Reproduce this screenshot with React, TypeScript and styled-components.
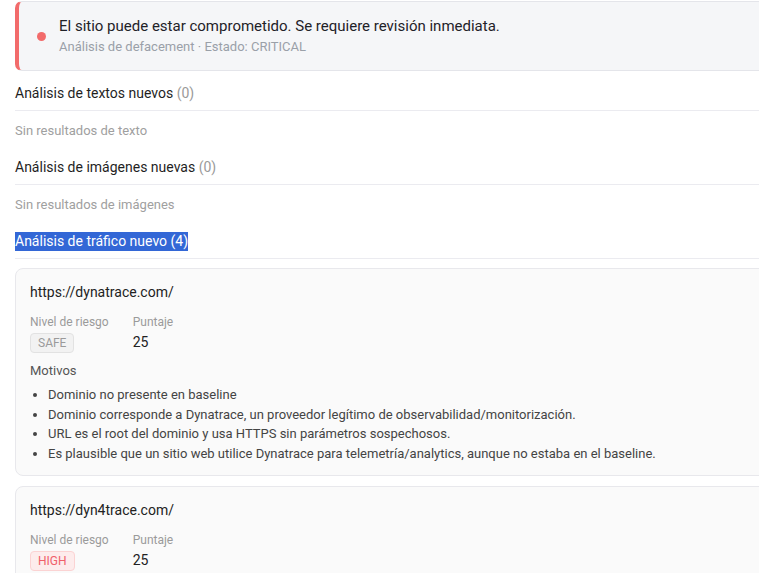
import styled, { createGlobalStyle } from "styled-components";

type RiskLevel = "SAFE" | "HIGH";

interface TrafficItem {
  url: string;
  risk: RiskLevel;
  score: number;
  reasons: string[];
}

const TRAFFIC: TrafficItem[] = [
  {
    url: "https://dynatrace.com/",
    risk: "SAFE",
    score: 25,
    reasons: [
      "Dominio no presente en baseline",
      "Dominio corresponde a Dynatrace, un proveedor legítimo de observabilidad/monitorización.",
      "URL es el root del dominio y usa HTTPS sin parámetros sospechosos.",
      "Es plausible que un sitio web utilice Dynatrace para telemetría/analytics, aunque no estaba en el baseline.",
    ],
  },
  {
    url: "https://dyn4trace.com/",
    risk: "HIGH",
    score: 25,
    reasons: [
      "Dominio no presente en baseline",
      "Dominio imita a Dynatrace sustituyendo una letra por un número (typosquatting).",
    ],
  },
];

const GlobalStyle = createGlobalStyle`
  html, body {
    margin: 0;
    padding: 0;
    overflow: hidden;
    background: #ffffff;
  }
  body {
    font-family: Roboto, "Liberation Sans", Arial, sans-serif;
    color: #222;
  }
`;

export default function App() {
  return (
    <>
      <GlobalStyle />
      <Page>
        <Alert>
          <Dot />
          <AlertText>
            <AlertTitle>El sitio puede estar comprometido. Se requiere revisión inmediata.</AlertTitle>
            <AlertMeta>Análisis de defacement · Estado: CRITICAL</AlertMeta>
          </AlertText>
        </Alert>

        <SectionTitle>
          Análisis de textos nuevos <Count>(0)</Count>
        </SectionTitle>
        <Empty>Sin resultados de texto</Empty>

        <SectionTitle>
          Análisis de imágenes nuevas <Count>(0)</Count>
        </SectionTitle>
        <Empty>Sin resultados de imágenes</Empty>

        <SectionTitle>
          <Selected>Análisis de tráfico nuevo (4)</Selected>
        </SectionTitle>

        <CardList>
          {TRAFFIC.map((item) => (
            <Card key={item.url}>
              <Url>{item.url}</Url>
              <Stats>
                <Stat>
                  <StatLabel>Nivel de riesgo</StatLabel>
                  <Badge $risk={item.risk}>{item.risk}</Badge>
                </Stat>
                <Stat>
                  <StatLabel>Puntaje</StatLabel>
                  <StatValue>{item.score}</StatValue>
                </Stat>
              </Stats>
              <ReasonsTitle>Motivos</ReasonsTitle>
              <Reasons>
                {item.reasons.map((r) => (
                  <li key={r}>{r}</li>
                ))}
              </Reasons>
            </Card>
          ))}
        </CardList>
      </Page>
    </>
  );
}

const Page = styled.div`
  width: 840px;
  padding: 1px 0 0 15px;
  box-sizing: border-box;
`;

const Alert = styled.div`
  display: flex;
  align-items: flex-start;
  gap: 13px;
  height: 70px;
  box-sizing: border-box;
  padding: 14px 18px 0 18px;
  background: #f5f6f8;
  border: 1px solid #e4e5ea;
  border-left: 4px solid #f26b6b;
  border-radius: 7px;
`;

const Dot = styled.span`
  align-self: center;
  width: 9px;
  height: 9px;
  margin-top: -14px;
  border-radius: 50%;
  background: #f26b6b;
  flex-shrink: 0;
`;

const AlertText = styled.div`
  display: flex;
  flex-direction: column;
  gap: 3px;
`;

const AlertTitle = styled.div`
  font-size: 15px;
  line-height: 20px;
  color: #1f2228;
`;

const AlertMeta = styled.div`
  font-size: 13px;
  line-height: 16px;
  color: #9aa0a8;
`;

const SectionTitle = styled.div`
  margin-top: 12px;
  padding-bottom: 7px;
  font-size: 14px;
  line-height: 20px;
  color: #1f1f1f;
  border-bottom: 1px solid #ebebf0;
`;

const Count = styled.span`
  color: #9a9a9a;
`;

const Selected = styled.span`
  background: #3367d6;
  color: #ffffff;
  padding: 1px 0 2px;
`;

const Empty = styled.div`
  margin-top: 11px;
  padding-bottom: 5px;
  font-size: 13px;
  line-height: 18px;
  color: #a0a0a0;
`;

const CardList = styled.div`
  display: flex;
  flex-direction: column;
  gap: 10px;
  margin-top: 9px;
`;

const Card = styled.div`
  background: #fafafa;
  border: 1px solid #e8e8ec;
  border-radius: 8px;
  padding: 13px 14px 12px;
`;

const Url = styled.div`
  font-size: 14px;
  line-height: 20px;
  color: #222;
`;

const Stats = styled.div`
  display: flex;
  gap: 24px;
  margin-top: 12px;
`;

const Stat = styled.div`
  display: flex;
  flex-direction: column;
  align-items: flex-start;
  gap: 3px;
`;

const StatLabel = styled.div`
  font-size: 12px;
  line-height: 16px;
  color: #9a9a9a;
`;

const StatValue = styled.div`
  font-size: 14px;
  line-height: 18px;
  color: #222;
`;

const Badge = styled.span<{ $risk: RiskLevel }>`
  display: inline-block;
  box-sizing: border-box;
  height: 20px;
  padding: 0 7px;
  font-size: 12px;
  line-height: 18px;
  border-radius: 4px;
  border: 1px solid ${({ $risk }) => ($risk === "HIGH" ? "#fbd3d3" : "#e2e2e2")};
  background: ${({ $risk }) => ($risk === "HIGH" ? "#fdecec" : "#f2f2f2")};
  color: ${({ $risk }) => ($risk === "HIGH" ? "#f0606a" : "#9a9a9a")};
`;

const ReasonsTitle = styled.div`
  margin-top: 9px;
  font-size: 13px;
  line-height: 18px;
  color: #555;
`;

const Reasons = styled.ul`
  margin: 5px 0 0;
  padding-left: 18px;
  font-size: 13px;
  line-height: 19.6px;
  color: #444;
`;
